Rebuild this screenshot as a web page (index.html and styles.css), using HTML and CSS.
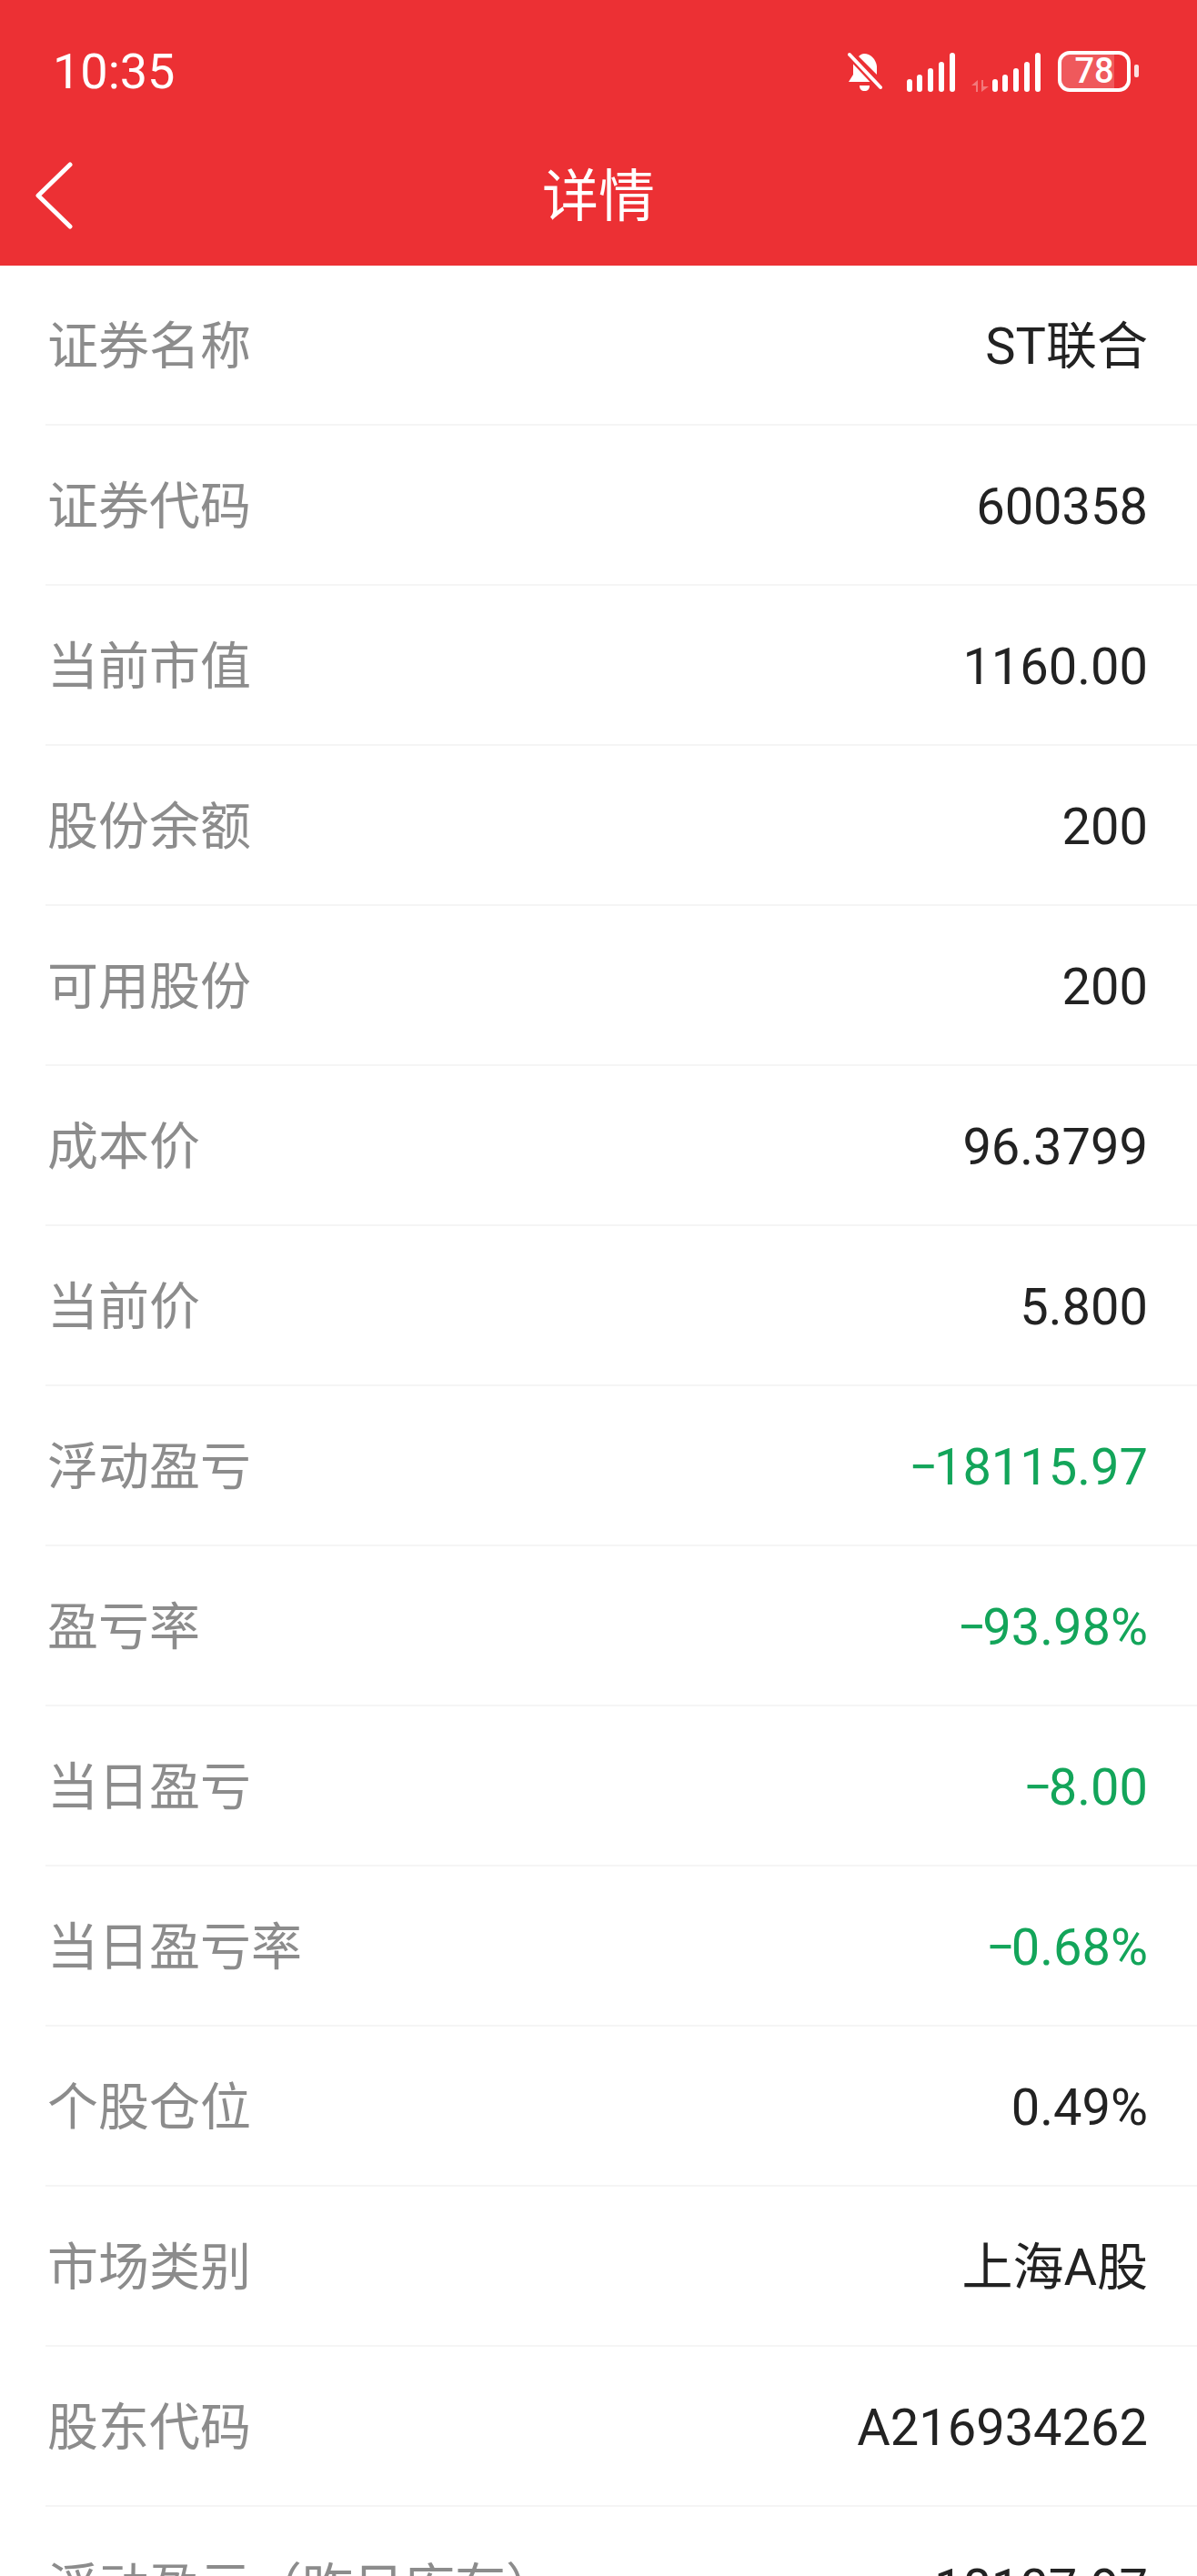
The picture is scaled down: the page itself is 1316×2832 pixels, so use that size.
FILE: index.html
```html
<!DOCTYPE html>
<html lang="zh-CN">
<head>
  <meta charset="UTF-8" />
  <meta name="viewport" content="width=device-width, initial-scale=1.0"/>
  <title>详情</title>
  <link rel="stylesheet" href="styles.css">
</head>
<body>
  <header class="top">
    <div class="status">
      <span class="time">10:35</span>
      <div class="status-icons">
        <svg class="bell" width="38" height="44" viewBox="0 0 38 44">
          <path d="M18 2c7 0 13 6 14 14v9L12 5c2-2 4-3 6-3z" fill="#fff"/>
          <path d="M6 12v13l-5 8h26z" fill="#fff"/>
          <path d="M13 37h11c0 4-2 6-5.500 6S13 41 13 37z" fill="#fff"/>
          <path d="M2 4l33 35" stroke="#ec3034" stroke-width="7"/>
          <path d="M2 3l34 36" stroke="#fff" stroke-width="4" stroke-linecap="round"/>
        </svg>
        <svg class="signal" width="53" height="43" viewBox="0 0 53 43">
          <rect x="0" y="29" width="6" height="14" rx="3" fill="#fff"/>
          <rect x="11" y="24" width="6" height="19" rx="3" fill="#fff"/>
          <rect x="23" y="17" width="6" height="26" rx="3" fill="#fff"/>
          <rect x="35" y="10" width="6" height="33" rx="3" fill="#fff"/>
          <rect x="47" y="0" width="6" height="43" rx="3" fill="#fff"/>
        </svg>
        <svg class="arrows" width="19" height="13" viewBox="0 0 19 13">
          <path d="M0 6l7-6v13H5V6zM11 0h2v7h6l-8 6z" fill="#fff" opacity="0.35"/>
        </svg>
        <svg class="signal" width="53" height="43" viewBox="0 0 53 43">
          <rect x="0" y="29" width="6" height="14" rx="3" fill="#fff"/>
          <rect x="11" y="24" width="6" height="19" rx="3" fill="#fff"/>
          <rect x="23" y="17" width="6" height="26" rx="3" fill="#fff"/>
          <rect x="35" y="10" width="6" height="33" rx="3" fill="#fff"/>
          <rect x="47" y="0" width="6" height="43" rx="3" fill="#fff"/>
        </svg>
        <div class="battery">
          <div class="battery-body"><div class="battery-fill"></div><span class="battery-num">78</span></div>
          <div class="battery-nub"></div>
        </div>
      </div>
    </div>
    <div class="titlebar">
      <svg class="back" width="42" height="74" viewBox="0 0 42 74">
        <path d="M38 3L3 37l35 34" fill="none" stroke="#fff" stroke-width="5" stroke-linecap="round" stroke-linejoin="round"/>
      </svg>
      <h1>详情</h1>
    </div>
  </header>

  <main class="list">
    <div class="row"><span class="label">证券名称</span><span class="value">ST联合</span></div>
    <div class="row"><span class="label">证券代码</span><span class="value">600358</span></div>
    <div class="row"><span class="label">当前市值</span><span class="value">1160.00</span></div>
    <div class="row"><span class="label">股份余额</span><span class="value">200</span></div>
    <div class="row"><span class="label">可用股份</span><span class="value">200</span></div>
    <div class="row"><span class="label">成本价</span><span class="value">96.3799</span></div>
    <div class="row"><span class="label">当前价</span><span class="value">5.800</span></div>
    <div class="row"><span class="label">浮动盈亏</span><span class="value down"><span class="minus">−</span>18115.97</span></div>
    <div class="row"><span class="label">盈亏率</span><span class="value down"><span class="minus">−</span>93.98%</span></div>
    <div class="row"><span class="label">当日盈亏</span><span class="value down"><span class="minus">−</span>8.00</span></div>
    <div class="row"><span class="label">当日盈亏率</span><span class="value down"><span class="minus">−</span>0.68%</span></div>
    <div class="row"><span class="label">个股仓位</span><span class="value">0.49%</span></div>
    <div class="row"><span class="label">市场类别</span><span class="value">上海A股</span></div>
    <div class="row"><span class="label">股东代码</span><span class="value">A216934262</span></div>
    <div class="row"><span class="label">浮动盈亏（昨日库存）</span><span class="value">18107.97</span></div>
  </main>
</body>
</html>
```

FILE: styles.css
```css
html, body {
  margin: 0;
  height: 2832px;
  overflow: hidden;
}

body {
  font-family: Roboto, "Noto Sans CJK SC", sans-serif;
  background: #fff;
  color: #222;
}

.top {
  background: #ec3034;
  color: white;
  height: 292px;
}

.status {
  display: flex;
  justify-content: space-between;
  align-items: center;
  height: 156px;
  padding: 0 64px 0 58px;
}

.time {
  font-size: 54px;
}

.status-icons {
  display: flex;
  align-items: flex-end;
}

.bell {
  margin-right: 27px;
}

.arrows {
  margin: 0 4px 0 18px;
}

.battery {
  display: flex;
  align-items: center;
  margin-left: 19px;
}

.battery-body {
  position: relative;
  box-sizing: border-box;
  width: 80px;
  height: 45px;
  border: 4px solid #fff;
  border-radius: 13px;
  overflow: hidden;
  text-align: center;
}

.battery-fill {
  position: absolute;
  inset: 0 14px 0 0;
  background: rgba(255, 255, 255, 0.2);
}

.battery-num {
  position: relative;
  font-size: 38px;
  font-weight: 500;
  line-height: 37px;
}

.battery-nub {
  width: 5px;
  height: 14px;
  margin-left: 4px;
  border-radius: 2px;
  background: #fff;
  opacity: 0.85;
}

.titlebar {
  position: relative;
  text-align: center;
}

.back {
  position: absolute;
  left: 39px;
  top: 22px;
}

h1 {
  margin: 0;
  font-family: "Noto Sans CJK SC", sans-serif;
  font-size: 62px;
  font-weight: 400;
  line-height: 110px;
}

.list {
  padding-left: 50px;
}

.row {
  display: flex;
  justify-content: space-between;
  align-items: center;
  box-sizing: border-box;
  height: 176px;
  padding: 0 54px 0 2px;
  border-bottom: 2px solid #f5f5f5;
}

.label {
  font-family: "Noto Sans CJK SC", sans-serif;
  font-size: 56px;
  line-height: 60px;
  margin-bottom: 6px;
  color: #8c8c8c;
}

.value {
  font-size: 56px;
  line-height: 60px;
  margin-top: 4px;
  color: #222;
}

.down {
  color: #13a55a;
}

.minus {
  letter-spacing: -4px;
}
```
